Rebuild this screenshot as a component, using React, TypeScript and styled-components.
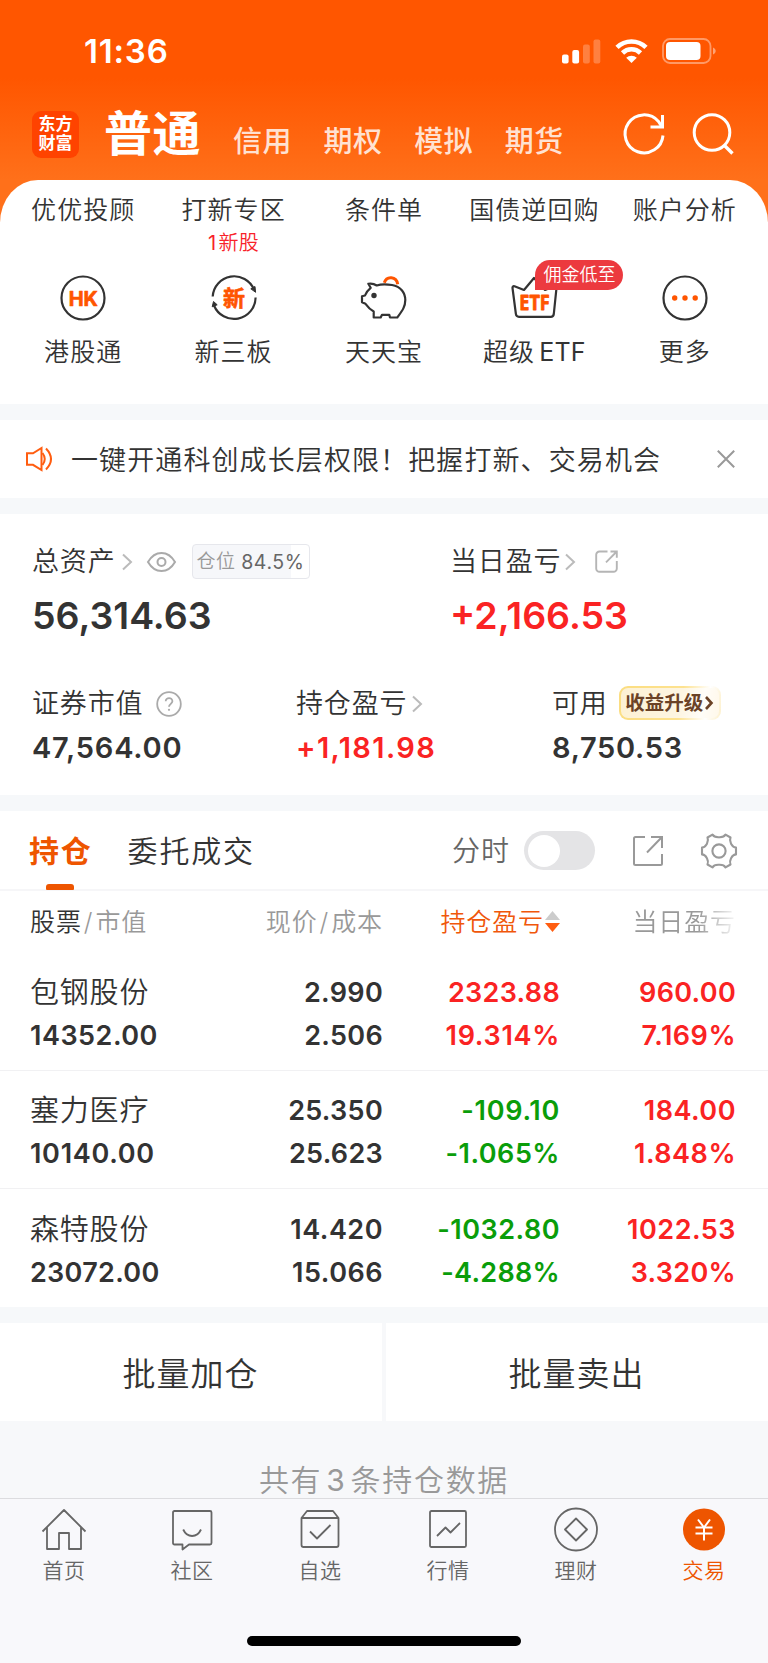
import React from 'react';
import styled, { createGlobalStyle } from 'styled-components';

const GlobalStyle = createGlobalStyle`
  * { box-sizing: border-box; }
  body { margin: 0; background: #f7f8fa; }
  svg { display: block; flex: none; overflow: visible; }
`;

const Page = styled.div`
  width: 768px;
  height: 1663px;
  display: flex;
  flex-direction: column;
  overflow: hidden;
  background: #f7f8fa;
  color: #333;
  font-family: Inter, 'Noto Sans CJK SC', sans-serif;
  font-weight: 350;
  white-space: nowrap;
`;

const Header = styled.header`
  height: 222px;
  flex: none;
  background: linear-gradient(#ff5600 0, #ff5600 78px, #ff701a 180px);
`;

const StatusBar = styled.div`
  height: 102px;
  display: flex;
  align-items: center;
  justify-content: space-between;
  padding: 0 51px 0 84px;
`;

const Clock = styled.span`
  color: #fff;
  font-size: 33px;
  font-weight: 600;
  line-height: 40px;
  letter-spacing: 0.8px;
`;

const StatusIcons = styled.div`
  display: flex;
  align-items: center;
  gap: 14px;
`;

const NavBar = styled.div`
  height: 64px;
  display: flex;
  align-items: center;
  padding: 0 34px 0 32px;
`;

const Logo = styled.div`
  width: 47px;
  height: 47px;
  border-radius: 9px;
  background: #ff4300;
  color: #fff;
  font-size: 17px;
  font-weight: 700;
  line-height: 19px;
  text-align: center;
  padding-top: 4px;
  margin-right: 25px;
`;

const NavTitle = styled.span`
  width: 129px;
  font-size: 48px;
  font-weight: 600;
  line-height: 60px;
  letter-spacing: 0.6px;
  color: #fff;
`;

const NavItem = styled.span`
  width: 90.6px;
  font-size: 29px;
  font-weight: 500;
  line-height: 40px;
  padding-top: 16px;
  letter-spacing: 0.4px;
  color: rgba(255, 255, 255, 0.82);
`;

const NavActions = styled.div`
  margin-left: auto;
  display: flex;
  gap: 27px;
`;

const Shortcuts = styled.section`
  height: 224px;
  margin-top: -42px;
  flex: none;
  display: grid;
  grid-template-columns: repeat(5, 1fr);
  padding: 12px 8px 0;
  background: #fff;
  border-radius: 38px 38px 0 0 / 43px 43px 0 0;
`;

const Shortcut = styled.div`
  display: flex;
  flex-direction: column;
  align-items: center;
`;

const ShortcutText = styled.span`
  font-size: 25px;
  line-height: 36px;
  letter-spacing: 1.05px;
`;

const Latin = styled.span`
  margin-left: 4px;
  font-weight: 400;
  letter-spacing: 0.2px;
`;

const ShortcutNote = styled.span`
  height: 40px;
  padding-top: 1px;
  font-size: 20px;
  line-height: 28px;
  letter-spacing: 0.4px;
  color: #f8222a;
`;

const NoteCount = styled.span`
  font-weight: 400;
  margin-right: 2px;
`;

const ShortcutIcon = styled.div`
  position: relative;
  width: 60px;
  height: 60px;
  margin-bottom: 6px;
`;

const Promo = styled.span`
  position: absolute;
  left: 31px;
  top: -8px;
  width: 88px;
  height: 30px;
  border-radius: 15px 15px 15px 0;
  background: #ec3a3f;
  color: #fff;
  font-size: 18px;
  line-height: 30px;
  text-align: center;
`;

const Gap = styled.div<{ $h?: number }>`
  height: ${(p) => p.$h ?? 16}px;
  flex: none;
  background: #f6f8fa;
`;

const Notice = styled.section`
  height: 78px;
  flex: none;
  display: flex;
  align-items: center;
  padding: 0 33px 0 25px;
  background: #fff;
`;

const NoticeText = styled.span`
  flex: 1;
  margin-left: 18px;
  font-family: 'Noto Sans CJK SC', sans-serif;
  font-size: 27px;
  line-height: 40px;
  letter-spacing: 1.1px;
`;

const Assets = styled.section`
  height: 281px;
  flex: none;
  padding: 27px 32px 0;
  background: #fff;
`;

const AssetRow = styled.div<{ $cols: string; $top?: number }>`
  display: grid;
  grid-template-columns: ${(p) => p.$cols};
  margin-top: ${(p) => p.$top ?? 0}px;
`;

const AssetLabel = styled.div`
  display: flex;
  align-items: center;
  height: 40px;
  font-size: 27px;
  line-height: 36px;
  padding-top: 1px;
  letter-spacing: 0.85px;
`;

const AssetValue = styled.div<{ $large?: boolean; $up?: boolean; $spacing?: number }>`
  font-size: ${(p) => (p.$large ? 37.5 : 29)}px;
  font-weight: 600;
  letter-spacing: ${(p) => p.$spacing ?? 0}px;
  line-height: ${(p) => (p.$large ? 69 : 50)}px;
  color: ${(p) => (p.$up ? '#fa2323' : '#333')};
`;

const Position = styled.div`
  display: flex;
  align-items: center;
  justify-content: center;
  gap: 6px;
  width: 118px;
  height: 35px;
  margin-left: 16px;
  border: 1px solid #e6e7ec;
  border-radius: 4px;
  background: linear-gradient(90deg, #f6f7fa 84.5%, #fff 84.5%);
  color: #999;
  font-size: 19px;
  line-height: 28px;
  letter-spacing: 0.3px;
`;

const PositionValue = styled.span`
  color: #666;
  font-size: 19.5px;
  font-weight: 400;
  letter-spacing: 0.6px;
  padding-top: 1px;
`;

const Upgrade = styled.span`
  display: flex;
  align-items: center;
  justify-content: center;
  gap: 2px;
  width: 102px;
  height: 34px;
  margin: -2px 0 0 11px;
  padding-right: 1px;
  border-radius: 9px;
  border: 2px solid transparent;
  background:
    linear-gradient(100deg, #fdf1d3, #fdf5e2 60%, #fffdf8 82%, #fff8ea) padding-box,
    linear-gradient(100deg, #fbdd80, #fde290 60%, #fff 85%, #fdf0cb) border-box;
  color: #6b4226;
  font-size: 19.5px;
  font-weight: 700;
  letter-spacing: 0;
`;

const Tabs = styled.div`
  height: 80px;
  flex: none;
  display: flex;
  align-items: center;
  padding: 1px 31px 0 29px;
  border-bottom: 2px solid #f6f6f8;
  background: #fff;
`;

const Tab = styled.div<{ $active?: boolean }>`
  position: relative;
  margin-right: 35px;
  font-size: 30px;
  line-height: 40px;
  letter-spacing: 1.8px;
  font-weight: ${(p) => (p.$active ? 600 : 350)};
  color: ${(p) => (p.$active ? '#ee5500' : '#333')};
  &::after {
    content: '';
    display: ${(p) => (p.$active ? 'block' : 'none')};
    position: absolute;
    left: 17px;
    bottom: -19px;
    width: 28px;
    height: 6px;
    border-radius: 3px 3px 1px 1px;
    background: #ee5500;
  }
`;

const ToggleLabel = styled.span`
  margin-left: auto;
  font-size: 28px;
  line-height: 40px;
  color: #666;
  letter-spacing: 1px;
`;

const Toggle = styled.div`
  width: 71px;
  height: 39px;
  padding: 3.5px 4px;
  margin: 0 38px 0 14px;
  border-radius: 20px;
  background: #e4e4e6;
  &::before {
    content: '';
    display: block;
    width: 32px;
    height: 32px;
    border-radius: 50%;
    background: #fff;
  }
`;

const Row = styled.div<{ $head?: boolean; $last?: boolean }>`
  display: grid;
  grid-template-columns: 173px 180px 177px 176px;
  height: ${(p) => (p.$head ? 62 : 118)}px;
  flex: none;
  align-content: center;
  padding: ${(p) => (p.$head ? 0 : 7)}px 30px 0;
  background: #fff;
  border-bottom: ${(p) => (p.$head || p.$last ? 0 : 1)}px solid #f1f1f3;
`;

const HeadCell = styled.div<{ $active?: boolean; $left?: boolean; $fade?: boolean }>`
  display: flex;
  align-items: center;
  justify-content: ${(p) => (p.$left ? 'flex-start' : 'flex-end')};
  font-size: 25px;
  line-height: 36px;
  letter-spacing: 0.9px;
  color: ${(p) => (p.$active ? '#f0570a' : '#999')};
  mask-image: ${(p) => (p.$fade ? 'linear-gradient(90deg, #000 78%, transparent 102%)' : 'none')};
`;

const Strong = styled.span`
  color: #333;
`;

const Slash = styled.span`
  margin: 0 2px;
`;

type Tone = 'up' | 'down' | 'plain';
const toneColor: Record<Tone, string> = { up: '#fa2323', down: '#0a9d0a', plain: '#333' };

const Cell = styled.div<{ $tone?: Tone; $left?: boolean; $spacing: number }>`
  text-align: ${(p) => (p.$left ? 'left' : 'right')};
  font-size: 27px;
  font-weight: 600;
  letter-spacing: ${(p) => p.$spacing}px;
  line-height: 42.6px;
  color: ${(p) => toneColor[p.$tone ?? 'plain']};
`;

// Inter's proportional "1" is narrow, so figures that hold it get looser tracking.
const Figure = ({ value, tone, left }: { value: string; tone?: Tone; left?: boolean }) => (
  <Cell $tone={tone} $left={left} $spacing={0.3 + 0.2 * (value.split('1').length - 1)}>
    {value}
  </Cell>
);

const StockName = styled.div`
  font-size: 29px;
  line-height: 42.6px;
  letter-spacing: 0.8px;
`;

const Actions = styled.div`
  display: grid;
  grid-template-columns: 382px 382px;
  column-gap: 4px;
  height: 98px;
  flex: none;
`;

const Action = styled.div`
  display: flex;
  align-items: center;
  justify-content: center;
  padding-right: 1px;
  background: #fff;
  font-size: 33px;
  letter-spacing: 1px;
`;

const Summary = styled.div`
  display: flex;
  justify-content: center;
  align-items: flex-end;
  height: 77px;
  flex: none;
  font-size: 30px;
  line-height: 35px;
  letter-spacing: 1.7px;
  color: #999;
`;

const Count = styled.span`
  margin: 0 4px;
  font-weight: 400;
`;

const BottomBar = styled.nav`
  flex: 1;
  display: flex;
  flex-direction: column;
  align-items: center;
  background: #f8f8fb;
  border-top: 1px solid #dcdcdf;
`;

const BottomTabs = styled.div`
  width: 100%;
  height: 137px;
  display: grid;
  grid-template-columns: repeat(6, 1fr);
  padding-top: 9px;
`;

const BottomTab = styled.div<{ $active?: boolean }>`
  display: flex;
  flex-direction: column;
  align-items: center;
  font-size: 21px;
  line-height: 30px;
  letter-spacing: 0.5px;
  gap: 2px;
  color: ${(p) => (p.$active ? '#ee5500' : '#666')};
`;

const HomeIndicator = styled.div`
  width: 274px;
  height: 10px;
  border-radius: 5px;
  background: #000;
`;

const ChevronSvg = styled.svg<{ $ml: number }>`
  margin-left: ${(p) => p.$ml}px;
`;

const Chevron = ({ ml = 6 }: { ml?: number }) => (
  <ChevronSvg $ml={ml} width="10" height="18" viewBox="0 0 10 18" fill="none" stroke="#bbb" strokeWidth="2">
    <path d="M1 1.5 9 9 1 16.5" />
  </ChevronSvg>
);

const SignalIcon = () => (
  <svg width="39" height="25" viewBox="0 0 39 25" fill="#fff">
    <rect x="0" y="15.5" width="6.6" height="9" rx="2" />
    <rect x="10.3" y="11" width="6.8" height="13.5" rx="2" />
    <rect x="21" y="5.5" width="6.8" height="19" rx="2" opacity=".25" />
    <rect x="31.5" y="0.5" width="6.8" height="24" rx="2" opacity=".25" />
  </svg>
);

const WifiIcon = () => (
  <svg width="33" height="24" viewBox="0 0 33 24" fill="none" stroke="#fff" strokeWidth="4.6">
    <path d="M2 8.4a20.8 20.8 0 0 1 29 0" />
    <path d="M7.5 14a12.8 12.8 0 0 1 18 0" />
    <path d="M11.2 18.8a7.6 7.6 0 0 1 10.6 0L16.5 24z" fill="#fff" stroke="none" />
  </svg>
);

const BatteryIcon = () => (
  <svg width="55" height="26" viewBox="0 0 55 26" fill="none">
    <rect x="1" y="1" width="47.5" height="24" rx="7" stroke="#fff" strokeOpacity=".4" strokeWidth="1.8" />
    <rect x="4" y="4" width="34.5" height="18" rx="4" fill="#fff" />
    <path d="M51 9.5c3.6 1.5 3.6 5.5 0 7z" fill="#fff" fillOpacity=".45" />
  </svg>
);

const RefreshIcon = () => (
  <svg width="41" height="42" viewBox="0 0 41 42" fill="none" stroke="#fff" strokeWidth="3">
    <path d="M39 22.5A19 19 0 1 1 34.5 8.5L38 14" />
    <path d="M38.5 2v12H26.5" />
  </svg>
);

const SearchIcon = () => (
  <svg width="42" height="42" viewBox="0 0 42 42" fill="none" stroke="#fff" strokeWidth="3">
    <circle cx="20" cy="19.5" r="17.8" />
    <path d="m32 32 8.5 8.5" strokeWidth="3.3" />
  </svg>
);

const iconLabel = {
  fill: '#ff5500',
  stroke: '#ff5500',
  strokeWidth: 0.6,
  strokeLinejoin: 'round' as const,
  textAnchor: 'middle' as const,
  fontWeight: 700,
};

const HkIcon = () => (
  <svg width="60" height="60" viewBox="0 0 60 60" fill="none" stroke="#333" strokeWidth="2.2">
    <circle cx="30" cy="30" r="21.5" />
    <text x="30.3" y="37.5" fontSize="20" {...iconLabel}>HK</text>
  </svg>
);

const NewBoardIcon = () => (
  <svg width="60" height="60" viewBox="0 0 60 60" fill="none" stroke="#333" strokeWidth="2.2">
    <path d="M8.7 28.5A21.5 21.5 0 0 1 50 21.5" />
    <path d="M51.6 29.5A21.6 21.6 0 0 1 10 37.5" />
    <path d="m46.8 20.8 4.2-2.3.6 5.8zM8.2 38.8l1.3-5.3 3.700 3.300z" fill="#333" strokeWidth="1" />
    <text x="30" y="38" fontSize="22" {...iconLabel}>新</text>
  </svg>
);

const PiggyIcon = () => (
  <svg width="60" height="60" viewBox="0 0 60 60" fill="none" stroke="#333" strokeWidth="2.2" strokeLinejoin="round">
    <path d="M14.3 15.8Q19 15 22.7 17.500C27 16 32 16 38 17C47 18.500 51.300 25 51.300 32C51.300 39 48 43 43.300 49.500H36L35.300 46.800H28L26.700 49.500H19.700V43.500C16 41.500 13.500 38.500 11.500 35.800L8 34.200V28.200L11 27.500C12 24.500 14 22 16.700 19.800z" />
    <circle cx="20" cy="27.5" r="2.7" fill="#333" stroke="none" />
    <path d="M30.3 14.8C32.5 7.5 42.5 8 43.7 16.2" stroke="#ff5500" strokeWidth="3" />
  </svg>
);

const EtfIcon = () => (
  <svg width="60" height="60" viewBox="0 0 60 60" fill="none" stroke="#333" strokeWidth="2.2" strokeLinejoin="round">
    <path d="M10.5 18.3 20 22 30 10l11 12 9.5-3.7q2.2-.6 2 1.5L49.8 46q-.4 2.800-3 2.800H15q-2.800 0-3.100-2.800L8.500 20q-.2-2.200 2-1.700z" />
    <text x="30.5" y="42" fontSize="20.5" {...iconLabel} strokeWidth={0.8} fontFamily="Noto Sans" textLength="30.5" lengthAdjust="spacingAndGlyphs">ETF</text>
  </svg>
);

const MoreIcon = () => (
  <svg width="60" height="60" viewBox="0 0 60 60" fill="none" stroke="#333" strokeWidth="2.2">
    <circle cx="30" cy="30" r="21.5" />
    <g fill="#ff5500" stroke="none">
      <circle cx="19.7" cy="30" r="2.7" />
      <circle cx="30" cy="30" r="2.7" />
      <circle cx="40.2" cy="30" r="2.7" />
    </g>
  </svg>
);

const SpeakerIcon = () => (
  <svg width="28" height="24" viewBox="0 0 28 24" fill="none" stroke="#ff5d10" strokeWidth="2">
    <path d="M2 6.3h6L16.5 1v22L8 17.8H2z" />
    <path d="M17.5 6q4.5 6 0 12" />
    <path d="M21 1.5q10 10.5 0 21" />
  </svg>
);

const CloseIcon = () => (
  <svg width="18" height="18" viewBox="0 0 18 18" stroke="#999" strokeWidth="2">
    <path d="M.8.8 17.2 17.2M17.2.8.8 17.2" />
  </svg>
);

const EyeSvg = styled.svg`
  margin-left: 15px;
`;

const EyeIcon = () => (
  <EyeSvg width="29" height="20" viewBox="0 0 29 20" fill="none" stroke="#aaa" strokeWidth="2">
    <path d="M1 10C8-2 21-2 28 10 21 22 8 22 1 10z" />
    <circle cx="14.5" cy="10" r="4" />
  </EyeSvg>
);

const ShareSmallSvg = styled.svg`
  margin-left: 20px;
`;

const ShareSmallIcon = () => (
  <ShareSmallSvg width="23" height="23" viewBox="0 0 23 23" fill="none" stroke="#b5b5b5" strokeWidth="1.9">
    <path d="M12.5 1.5H4.5a3.3 3.3 0 0 0-3.3 3.3V18.5a3.3 3.3 0 0 0 3.3 3.3h14a3.3 3.3 0 0 0 3.3-3.3V11" />
    <path d="M15.5 1.5h6.3v6.3M21.8 1.5 11 12.3" />
  </ShareSmallSvg>
);

const HelpSvg = styled.svg`
  margin-left: 13px;
`;

const HelpIcon = () => (
  <HelpSvg width="26" height="26" viewBox="0 0 26 26" fill="none" stroke="#aaa" strokeWidth="1.8">
    <circle cx="13" cy="13" r="11.8" />
    <path d="M9.7 10.3c0-4.4 6.8-4.3 6.7 0 0 2.3-3.4 2.9-3.4 5.5" />
    <circle cx="13" cy="18.8" r="1.1" fill="#aaa" stroke="none" />
  </HelpSvg>
);

const UpgradeArrow = () => (
  <svg width="8" height="14" viewBox="0 0 8 14" fill="none" stroke="#6b4226" strokeWidth="2.6">
    <path d="m1 1 5.5 6L1 13" />
  </svg>
);

const ShareIcon = () => (
  <svg width="30" height="30" viewBox="0 0 30 30" fill="none" stroke="#999" strokeWidth="2">
    <path d="M12 1H2.5Q1 1 1 2.5v25Q1 29 2.5 29h25q1.5 0 1.5-1.5V18" />
    <path d="M18 1h11v11M29 1 14 16.5" />
  </svg>
);

const GearSvg = styled.svg`
  margin-left: 38px;
`;

const GearIcon = () => (
  <GearSvg width="36" height="36" viewBox="0 0 36 36" fill="none" stroke="#999" strokeWidth="2.1" strokeLinejoin="round">
    <path d="M11.5 1.6C13 4.5 15.5 4.2 18 4.2S23 4.5 24.5 1.6L29.5 4.5C28.2 7.6 29.2 9 30.2 10.9S31.8 14.3 35 14.6V21.4C31.8 21.7 31.2 23.2 30.2 25.1S28.2 28.4 29.5 31.5L24.5 34.4C23 31.5 20.5 31.8 18 31.8S13 31.5 11.5 34.4L6.5 31.5C7.8 28.4 6.8 27 5.8 25.1S4.2 21.7 1 21.4V14.6C4.2 14.3 4.8 12.8 5.8 10.9S7.8 7.6 6.5 4.5z" />
    <circle cx="18" cy="18" r="6.6" />
  </GearSvg>
);

const SortSvg = styled.svg`
  margin-left: 1px;
`;

const SortIcon = () => (
  <SortSvg width="15" height="22" viewBox="0 0 15 22">
    <path d="M7.5 0 15 9H0z" fill="#ccc" />
    <path d="M0 12h15l-7.5 9z" fill="#ff5d10" />
  </SortSvg>
);

const TabGlyph = ({ children }: { children: React.ReactNode }) => (
  <svg width="46" height="46" viewBox="0 0 46 46" fill="none" stroke="#666" strokeWidth="1.8" strokeLinejoin="round">
    {children}
  </svg>
);

const holdings = [
  { name: '包钢股份', value: '14352.00', price: '2.990', cost: '2.506', pl: '2323.88', plPct: '19.314%', tone: 'up' as Tone, day: '960.00', dayPct: '7.169%' },
  { name: '塞力医疗', value: '10140.00', price: '25.350', cost: '25.623', pl: '-109.10', plPct: '-1.065%', tone: 'down' as Tone, day: '184.00', dayPct: '1.848%' },
  { name: '森特股份', value: '23072.00', price: '14.420', cost: '15.066', pl: '-1032.80', plPct: '-4.288%', tone: 'down' as Tone, day: '1022.53', dayPct: '3.320%' },
];

const shortcuts = [
  { title: '优优投顾', label: '港股通', icon: <HkIcon /> },
  { title: '打新专区', note: <><NoteCount>1</NoteCount>新股</>, label: '新三板', icon: <NewBoardIcon /> },
  { title: '条件单', label: '天天宝', icon: <PiggyIcon /> },
  { title: '国债逆回购', label: <>超级<Latin>ETF</Latin></>, icon: <EtfIcon />, promo: '佣金低至' },
  { title: '账户分析', label: '更多', icon: <MoreIcon /> },
];

const bottomTabs = [
  { label: '首页', icon: <path d="M1.5 23.5 23 2l21.5 21.5M6 19.5V41h12V25h10v16h12V19.5" /> },
  { label: '社区', icon: <path d="M5.5 3h35.5q1.5 0 1.5 1.5v30.5q0 1.5-1.5 1.5H20l-6.5 5v-5H5.5Q4 36.5 4 35v-30.5Q4 3 5.5 3zM14.2 21.5q3 6.5 8.9 6.5t8.9-6.5" /> },
  { label: '自选', icon: <path d="M4.5 10 10 3h26l5.5 7v27q0 2-2 2h-33q-2 0-2-2zM4.5 10h37M13 23.5l7 7L33.5 17" /> },
  { label: '行情', icon: <path d="M6.5 3h33q1.5 0 1.5 1.5v33q0 1.5-1.5 1.5h-33Q5 39 5 37.5v-33Q5 3 6.500 3zM12 28l8.500-8.500 5 5L35 15" /> },
  { label: '理财', icon: <><circle cx="23" cy="21.5" r="21" /><path d="M23 10.5l11 11-11 11-11-11z" /></> },
  { label: '交易', active: true, icon: <><circle cx="23" cy="21.5" r="21" fill="#ee5500" stroke="none" /><path d="m17 11.5 6 8 6-8M14.5 19.5h17M14.5 25.5h17M23 19.5v13" stroke="#fff" strokeWidth="2" /></> },
];

export default function App() {
  return (
    <Page>
      <GlobalStyle />
      <Header>
        <StatusBar>
          <Clock>11:36</Clock>
          <StatusIcons>
            <SignalIcon />
            <WifiIcon />
            <BatteryIcon />
          </StatusIcons>
        </StatusBar>
        <NavBar>
          <Logo>东方<br />财富</Logo>
          <NavTitle>普通</NavTitle>
          <NavItem>信用</NavItem>
          <NavItem>期权</NavItem>
          <NavItem>模拟</NavItem>
          <NavItem>期货</NavItem>
          <NavActions>
            <RefreshIcon />
            <SearchIcon />
          </NavActions>
        </NavBar>
      </Header>
      <Shortcuts>
        {shortcuts.map((s) => (
          <Shortcut key={s.title}>
            <ShortcutText>{s.title}</ShortcutText>
            <ShortcutNote>{s.note}</ShortcutNote>
            <ShortcutIcon>
              {s.icon}
              {s.promo && <Promo>{s.promo}</Promo>}
            </ShortcutIcon>
            <ShortcutText>{s.label}</ShortcutText>
          </Shortcut>
        ))}
      </Shortcuts>
      <Gap />
      <Notice>
        <SpeakerIcon />
        <NoticeText>一键开通科创成长层权限！把握打新、交易机会</NoticeText>
        <CloseIcon />
      </Notice>
      <Gap />
      <Assets>
        <AssetRow $cols="418px 1fr">
          <AssetLabel>
            总资产<Chevron /><EyeIcon />
            <Position>仓位<PositionValue>84.5%</PositionValue></Position>
          </AssetLabel>
          <AssetLabel>当日盈亏<Chevron ml={4} /><ShareSmallIcon /></AssetLabel>
          <AssetValue $large>56,314.63</AssetValue>
          <AssetValue $large $up>+2,166.53</AssetValue>
        </AssetRow>
        <AssetRow $cols="264px 256px 1fr" $top={33}>
          <AssetLabel>证券市值<HelpIcon /></AssetLabel>
          <AssetLabel>持仓盈亏<Chevron ml={5} /></AssetLabel>
          <AssetLabel>可用<Upgrade>收益升级<UpgradeArrow /></Upgrade></AssetLabel>
          <AssetValue $spacing={0.8}>47,564.00</AssetValue>
          <AssetValue $up $spacing={1.4}>+1,181.98</AssetValue>
          <AssetValue $spacing={0.7}>8,750.53</AssetValue>
        </AssetRow>
      </Assets>
      <Gap />
      <Tabs>
        <Tab $active>持仓</Tab>
        <Tab>委托成交</Tab>
        <ToggleLabel>分时</ToggleLabel>
        <Toggle />
        <ShareIcon />
        <GearIcon />
      </Tabs>
      <Row $head>
        <HeadCell $left><Strong>股票</Strong><Slash>/</Slash>市值</HeadCell>
        <HeadCell>现价<Slash>/</Slash>成本</HeadCell>
        <HeadCell $active>持仓盈亏<SortIcon /></HeadCell>
        <HeadCell $fade>当日盈亏</HeadCell>
      </Row>
      {holdings.map((h, i) => (
        <Row key={h.name} $last={i === 2}>
          <StockName>{h.name}</StockName>
          <Figure value={h.price} />
          <Figure value={h.pl} tone={h.tone} />
          <Figure value={h.day} tone="up" />
          <Figure value={h.value} left />
          <Figure value={h.cost} />
          <Figure value={h.plPct} tone={h.tone} />
          <Figure value={h.dayPct} tone="up" />
        </Row>
      ))}
      <Gap />
      <Actions>
        <Action>批量加仓</Action>
        <Action>批量卖出</Action>
      </Actions>
      <Summary>共有<Count>3</Count>条持仓数据</Summary>
      <BottomBar>
        <BottomTabs>
          {bottomTabs.map((t) => (
            <BottomTab key={t.label} $active={t.active}>
              <TabGlyph>{t.icon}</TabGlyph>
              {t.label}
            </BottomTab>
          ))}
        </BottomTabs>
        <HomeIndicator />
      </BottomBar>
    </Page>
  );
}
